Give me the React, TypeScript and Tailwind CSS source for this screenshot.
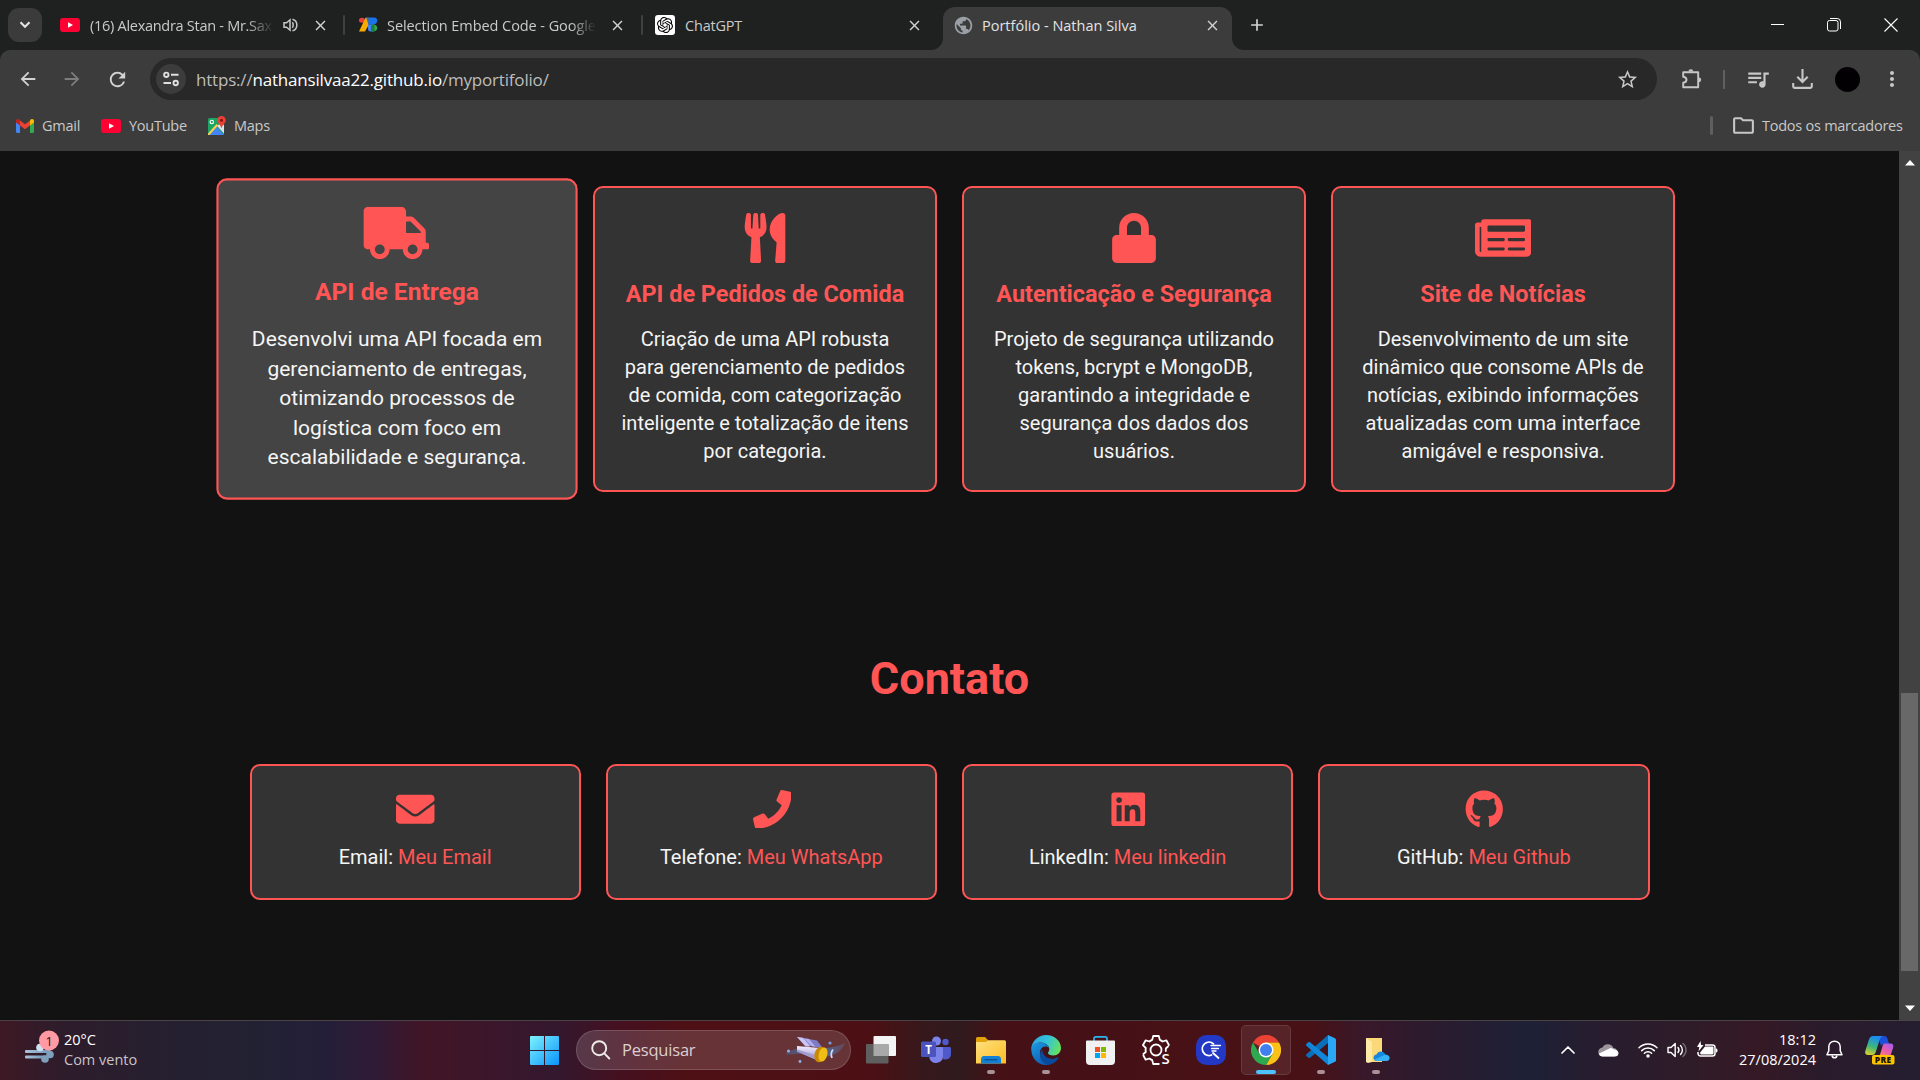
import React from "react";
import {
  FaTruck,
  FaUtensils,
  FaLock,
  FaNewspaper,
  FaEnvelope,
  FaPhone,
  FaLinkedin,
  FaGithub,
} from "react-icons/fa";
import {
  MdArrowBack,
  MdArrowForward,
  MdRefresh,
  MdStarOutline,
  MdClose,
  MdAdd,
  MdMoreVert,
  MdOutlineFolder,
  MdQueueMusic,
  MdPublic,
} from "react-icons/md";
import { SiOpenai } from "react-icons/si";

/* ---------- browser icons ---------- */

function YouTubeIcon() {
  return (
    <svg width="20" height="14" viewBox="0 0 20 14" className="shrink-0">
      <rect width="20" height="14" rx="3" fill="#ff0033" />
      <path d="M8 4.2 13 7l-5 2.8z" fill="#fff" />
    </svg>
  );
}

function GmailIcon() {
  return (
    <svg width="18" height="14" viewBox="0 0 18 14" className="shrink-0">
      <path d="M0 3v9.8c0 .7.5 1.2 1.2 1.2H4V6z" fill="#4285f4" />
      <path d="M18 3v9.8c0 .7-.5 1.2-1.2 1.2H14V6z" fill="#34a853" />
      <path d="M14 1.5v5l4-3V2c0-1.8-2-2.6-3.4-1.5z" fill="#fbbc04" />
      <path d="M4 6.5v-5l5 3.7 5-3.7v5l-5 3.8z" fill="#ea4335" />
      <path d="M0 2v1.5l4 3v-5L3.4.5C2-.6 0 .2 0 2z" fill="#c5221f" />
    </svg>
  );
}

function MapsIcon() {
  return (
    <svg width="18" height="19" viewBox="0 0 18 19" className="shrink-0">
      <rect x="0" y="2" width="16" height="17" rx="1.5" fill="#1da462" />
      <path d="M1 19 8.500 10.500 16 19z" fill="#4285f4" />
      <path d="M0 17.500V19h1.500L10 9.500 8.500 8z" fill="#ffd04b" />
      <path d="M9 9.800 16 17.500V9l-4-1z" fill="#dfe3e8" />
      <circle cx="3.8" cy="6" r="1.7" fill="none" stroke="#fff" strokeWidth="1.1" />
      <path d="M13.500 0C11 0 9.300 1.900 9.300 4.200c0 3 3.300 4.100 4.200 8.300.9-4.200 4.200-5.300 4.200-8.300C17.700 1.900 16 0 13.500 0z" fill="#ea4335" />
      <circle cx="13.5" cy="4.2" r="1.5" fill="#811411" />
    </svg>
  );
}

function BlocksIcon() {
  return (
    <svg width="19" height="15" viewBox="0 0 19 18" preserveAspectRatio="none" className="mb-px shrink-0">
      <circle cx="3" cy="3.8" r="3" fill="#ea4335" />
      <path d="M6.500 1h3v9L6 17.500H0z" fill="#f9ab00" />
      <path d="M9.500.5H15c2.300 0 3.300 1.600 3.300 3.700S17 9 14.500 9h-5z" fill="#1a73e8" />
      <path d="M7.200 1 9.500.5V9z" fill="#1a73e8" />
      <path d="M9 9h5v8.500h-2a3 3 0 0 1-3-3z" fill="#4285f4" />
      <path d="M13.500 9a4.200 4.200 0 1 1 0 8.300c-1.800-2-1.800-6 0-8.300z" fill="#34a853" />
      <path d="M12 10.500c1.500-1.500 3-1.700 3.500-1.500v8c-1.500.5-3 0-3.500-1z" fill="#188038" />
    </svg>
  );
}

function SpeakerIcon() {
  return (
    <svg width="16" height="14" viewBox="0 0 16 14" fill="none" stroke="#c7c7c7" strokeWidth="1.5" className="shrink-0">
      <path d="M1 4.800h2.600L7 1.800v10.400L3.600 9.200H1z" />
      <path d="M9.300 4.300c1.200 1.200 1.200 4.200 0 5.400" />
      <path d="M9.500 1.200c5.800 1.500 5.800 10.100 0 11.600" />
    </svg>
  );
}

function TuneIcon() {
  return (
    <svg width="18" height="18" viewBox="0 0 18 18" fill="none" stroke="#dedede" strokeWidth="1.9">
      <circle cx="4.3" cy="4.8" r="2.2" />
      <path d="M9 4.800h7.500M1.500 13h7.500" />
      <circle cx="13.7" cy="13" r="2.2" />
    </svg>
  );
}

function PuzzleIcon() {
  return (
    <svg width="22" height="22" viewBox="0 0 22 22">
      <path
        d="M2.200 4.200h15v15h-15v-4.500c4.400-.6 4.400-5.400 0-6z"
        fill="none"
        stroke="#c7c7c7"
        strokeWidth="1.9"
        strokeLinejoin="round"
      />
      <path d="M7.400 3.600a2.400 2.400 0 0 1 4.800 0zM17.800 9.400a2.400 2.400 0 0 1 0 4.800z" fill="#c7c7c7" />
    </svg>
  );
}

function DownloadIcon() {
  return (
    <svg width="21" height="20" viewBox="0 0 21 20" fill="none" stroke="#c7c7c7" strokeWidth="2.1">
      <path d="M10.500 0v12.500M5.300 7.800 10.500 13l5.200-5.200" />
      <path d="M1.200 14v3.500c0 .9.600 1.400 1.400 1.400h15.800c.8 0 1.400-.5 1.400-1.400V14" />
    </svg>
  );
}

/* ---------- window chrome ---------- */

function TabClose() {
  return <MdClose className="size-[17px] shrink-0 text-[#d2d2d2]" />;
}

function TabStrip() {
  return (
    <div className="flex h-[50px] w-full items-center bg-[#1f2120] text-[#c9cac9]">
      <div className="ml-2 flex h-[34px] w-[34px] items-center justify-center rounded-[11px] bg-[#3b3b3b]">
        <svg width="12" height="8" viewBox="0 0 12 8" fill="none" stroke="#e3e3e3" strokeWidth="2.1">
          <path d="M1.500 1.200 6 5.700l4.500-4.500" />
        </svg>
      </div>
      <div className="ml-[18px] flex w-[284px] items-center">
        <YouTubeIcon />
        <span className="mt-px ml-[10px] w-[184px] whitespace-nowrap text-[14.5px] tracking-[-0.28px] mask-r-from-85%">
          (16) Alexandra Stan - Mr.Sax
        </span>
        <span className="ml-[9px] flex">
          <SpeakerIcon />
        </span>
        <span className="ml-[13px] flex">
          <TabClose />
        </span>
      </div>
      <div className="-ml-[1px] h-5 w-[2px] rounded bg-[#3f4140]" />
      <div className="ml-[14px] flex w-[282px] items-center">
        <BlocksIcon />
        <span className="mt-px ml-[9px] w-[209px] whitespace-nowrap text-[14.5px] tracking-[-0.07px] mask-r-from-88%">
          Selection Embed Code - Google
        </span>
        <span className="ml-[13px] flex">
          <TabClose />
        </span>
      </div>
      <div className="h-5 w-[2px] rounded bg-[#3f4140]" />
      <div className="ml-[12px] flex w-[276px] items-center">
        <span className="flex size-5 items-center justify-center rounded-[3px] bg-white">
          <SiOpenai className="size-[16px] text-black" />
        </span>
        <span className="mt-px ml-[10px] grow whitespace-nowrap text-[14.5px] tracking-[-0.2px]">ChatGPT</span>
        <span className="mr-[8px] flex">
          <TabClose />
        </span>
      </div>
      <div className="flex h-[50px] items-end self-stretch">
        <svg width="12" height="12" viewBox="0 0 12 12">
          <path d="M12 0v12H0A12 12 0 0 0 12 0z" fill="#3c3c3c" />
        </svg>
        <div className="flex h-[43px] w-[289px] items-center rounded-t-[12px] bg-[#3c3c3c] pb-[7px]">
          <MdPublic className="ml-[10px] size-[21px] text-[#9aa0a6]" />
          <span className="mt-px ml-[8px] grow whitespace-nowrap text-[14.5px] text-[#e3e3e3]">
            Portfólio - Nathan Silva
          </span>
          <span className="mr-[11px] flex">
            <TabClose />
          </span>
        </div>
        <svg width="12" height="12" viewBox="0 0 12 12">
          <path d="M0 0v12h12A12 12 0 0 1 0 0z" fill="#3c3c3c" />
        </svg>
      </div>
      <MdAdd className="ml-[3px] size-[20px] text-[#d2d2d2]" />
      <div className="ml-auto flex items-center pb-[1px]">
        <div className="h-px w-[13px] bg-white" />
        <svg width="14" height="14" viewBox="0 0 14 14" fill="none" stroke="#fff" className="ml-[43px]">
          <rect x="0.5" y="2.5" width="10.5" height="10.5" rx="2" />
          <path d="M3 .5h7.200a3.300 3.300 0 0 1 3.300 3.300V11" />
        </svg>
        <svg width="14" height="14" viewBox="0 0 14 14" stroke="#fff" strokeWidth="1.1" className="mr-[22px] ml-[43px]">
          <path d="M.5.5l13 13M13.500.5l-13 13" />
        </svg>
      </div>
    </div>
  );
}

function Toolbar() {
  return (
    <div className="w-full bg-[#1f2120]">
      <div className="h-[101px] w-full rounded-t-[10px] bg-[#3c3c3c] pt-2">
        <div className="flex h-[42px] items-center">
          <MdArrowBack className="ml-[17px] size-[22px] text-[#d2d2d2]" />
          <MdArrowForward className="ml-[22px] size-[22px] text-[#7d7d7d]" />
          <MdRefresh className="ml-[23px] size-[23px] text-[#d2d2d2]" />
          <div className="ml-[21px] flex h-[42px] w-[1507px] items-center rounded-full bg-[#282828]">
            <div className="ml-[6px] flex size-[30px] items-center justify-center rounded-full bg-[#3c3c3c]">
              <TuneIcon />
            </div>
            <span className="mt-px ml-[10px] text-[17px] tracking-[-0.19px] whitespace-nowrap text-[#bdbdbd]">
              https://<span className="text-white">nathansilvaa22.github.io</span>/myportifolio/
            </span>
            <MdStarOutline className="mr-[18px] ml-auto size-[23px] text-[#c7c7c7]" />
          </div>
          <span className="ml-[24px] flex">
            <PuzzleIcon />
          </span>
          <div className="ml-[20px] h-[19px] w-[2px] bg-[#606060]" />
          <MdQueueMusic className="ml-[20px] size-[26px] text-[#c7c7c7]" />
          <span className="ml-[21px] flex">
            <DownloadIcon />
          </span>
          <div className="ml-[22px] size-[25px] rounded-full bg-[#030003]" />
          <MdMoreVert className="ml-[20px] size-[24px] text-[#c7c7c7]" />
        </div>
        <div className="flex h-[51px] items-center text-[14.5px] tracking-[-0.25px] text-[#c9c9c9]">
          <div className="ml-4 flex w-[85px] items-center gap-[8px]">
            <GmailIcon />
            <span>Gmail</span>
          </div>
          <div className="flex w-[107px] items-center gap-[8px]">
            <YouTubeIcon />
            <span>YouTube</span>
          </div>
          <div className="flex items-center gap-[8px]">
            <MapsIcon />
            <span>Maps</span>
          </div>
          <div className="ml-auto flex items-center">
            <div className="h-[19px] w-[3px] rounded bg-[#5f5f5f]" />
            <MdOutlineFolder className="ml-[18px] size-[25px] text-[#c7c7c7]" />
            <span className="mr-[18px] ml-[6px] w-[140px] text-right whitespace-nowrap">Todos os marcadores</span>
          </div>
        </div>
      </div>
    </div>
  );
}

/* ---------- portfolio page ---------- */

type Project = {
  icon: React.ReactNode;
  title: string;
  lines: string[];
  active?: boolean;
};

const projects: Project[] = [
  {
    icon: <FaTruck className="mr-px h-[50px] w-[62.5px]" />,
    title: "API de Entrega",
    lines: [
      "Desenvolvi uma API focada em",
      "gerenciamento de entregas,",
      "otimizando processos de",
      "logística com foco em",
      "escalabilidade e segurança.",
    ],
    active: true,
  },
  {
    icon: <FaUtensils className="size-[50px]" />,
    title: "API de Pedidos de Comida",
    lines: [
      "Criação de uma API robusta",
      "para gerenciamento de pedidos",
      "de comida, com categorização",
      "inteligente e totalização de itens",
      "por categoria.",
    ],
  },
  {
    icon: <FaLock className="size-[50px]" />,
    title: "Autenticação e Segurança",
    lines: [
      "Projeto de segurança utilizando",
      "tokens, bcrypt e MongoDB,",
      "garantindo a integridade e",
      "segurança dos dados dos",
      "usuários.",
    ],
  },
  {
    icon: <FaNewspaper className="h-[50px] w-[56.25px]" />,
    title: "Site de Notícias",
    lines: [
      "Desenvolvimento de um site",
      "dinâmico que consome APIs de",
      "notícias, exibindo informações",
      "atualizadas com uma interface",
      "amigável e responsiva.",
    ],
  },
];

const contacts = [
  { icon: <FaEnvelope />, label: "Email:", link: "Meu Email" },
  { icon: <FaPhone />, label: "Telefone:", link: "Meu WhatsApp" },
  { icon: <FaLinkedin />, label: "LinkedIn:", link: "Meu linkedin" },
  { icon: <FaGithub />, label: "GitHub:", link: "Meu Github" },
];

function ProjectCard({ icon, title, lines, active }: Project) {
  return (
    <div
      className={
        "flex h-[306px] w-[344px] flex-col items-center rounded-[10px] border-2 border-[#ff5555] pt-[25px] " +
        (active ? "translate-x-px scale-105 bg-[#444444]" : "bg-[#333333]")
      }
    >
      <div className="text-[#ff5555]">{icon}</div>
      <h3 className="mt-[14px] text-[23.4px] leading-[34px] font-bold whitespace-nowrap text-[#ff5555]">{title}</h3>
      <p className="mt-[14px] text-center text-[20px] leading-[28px] whitespace-nowrap text-[#f5f5f5]">
        {lines.map((l) => (
          <span key={l} className="block">
            {l}
          </span>
        ))}
      </p>
    </div>
  );
}

function Page() {
  return (
    <div className="flex h-[869px] w-full bg-[#121212]">
      <main className="w-[1899px] font-[Roboto,sans-serif]">
        <section className="flex justify-center gap-[25px] pt-[35px]">
          {projects.map((p) => (
            <ProjectCard key={p.title} {...p} />
          ))}
        </section>
        <h2 className="mt-[155px] text-center text-[45px] leading-[63px] font-bold text-[#ff5555]">Contato</h2>
        <section className="mx-auto mt-[54px] grid w-[1400px] grid-cols-4 gap-[25px]">
          {contacts.map((c) => (
            <div
              key={c.label}
              className="flex h-[136px] flex-col items-center rounded-[10px] border-2 border-[#ff5555] bg-[#333333] pt-[23.5px]"
            >
              <div className="pl-px text-[38.5px] text-[#ff5555]">{c.icon}</div>
              <p className="mt-[15px] text-[20px] leading-[28px] whitespace-nowrap text-[#f5f5f5]">
                {c.label} <span className="text-[#ff5555]">{c.link}</span>
              </p>
            </div>
          ))}
        </section>
      </main>
      <div className="flex w-[21px] flex-col items-center bg-[#424242]">
        <svg width="10" height="6" viewBox="0 0 10 6" className="mt-[9px]">
          <path d="M5 0l5 5.500H0z" fill="#fff" />
        </svg>
        <div className="mt-[527px] h-[278px] w-[17px] bg-[#686868]" />
        <svg width="10" height="6" viewBox="0 0 10 6" className="mt-auto mb-[9px]">
          <path d="M0 .5h10L5 6z" fill="#fff" />
        </svg>
      </div>
    </div>
  );
}

/* ---------- taskbar ---------- */

function WeatherIcon() {
  return (
    <svg width="35" height="34" viewBox="0 0 35 34">
      <defs>
        <linearGradient id="wind" x1="0" x2="1">
          <stop offset="0" stopColor="#a9c5da" />
          <stop offset="1" stopColor="#6f94b5" />
        </linearGradient>
      </defs>
      <rect x="0" y="20" width="26" height="3" rx="1" fill="url(#wind)" />
      <rect x="0" y="25.5" width="21" height="3" rx="1" fill="url(#wind)" />
      <circle cx="25" cy="24.5" r="3.8" fill="#7fa0bd" />
      <circle cx="20" cy="29" r="3.8" fill="#7fa0bd" />
      <circle cx="15" cy="17.5" r="3.8" fill="#cfe0f0" />
      <circle cx="24" cy="10.5" r="10" fill="#ff99a4" />
      <text x="24" y="15.5" textAnchor="middle" fontSize="13.5" fontFamily="Open Sans, sans-serif" fill="#2b1a1c">
        1
      </text>
    </svg>
  );
}

function WindowsIcon() {
  return (
    <svg width="29" height="29" viewBox="0 0 29 29">
      <defs>
        <linearGradient id="win" x1="0" y1="0" x2="1" y2="1" gradientUnits="objectBoundingBox">
          <stop offset="0" stopColor="#7df3ff" />
          <stop offset="1" stopColor="#0a93fb" />
        </linearGradient>
      </defs>
      <path
        d="M1 0h13v14H0V1a1 1 0 0 1 1-1zM15 0h13a1 1 0 0 1 1 1v13H15zM0 15h14v14H1a1 1 0 0 1-1-1zM15 15h14v13a1 1 0 0 1-1 1H15z"
        fill="url(#win)"
      />
    </svg>
  );
}

function SearchArt() {
  return (
    <svg width="60" height="30" viewBox="0 0 60 30">
      <defs>
        <linearGradient id="comet" x1="0" x2="1">
          <stop offset="0" stopColor="#4a6fa8" stopOpacity="0.3" />
          <stop offset="0.5" stopColor="#3f6cae" />
          <stop offset="1" stopColor="#5e7fb4" stopOpacity="0.25" />
        </linearGradient>
        <linearGradient id="tube" x1="0" y1="0" x2="0" y2="1">
          <stop offset="0" stopColor="#f1edff" />
          <stop offset="1" stopColor="#9b93cc" />
        </linearGradient>
      </defs>
      <path d="M0 19c6-5 14-6 20-6 12 0 26 2 40-5-2 7-9 12-20 14-10 1.500-14-3-24-3.500-6 0-11 2-16 .5z" fill="url(#comet)" />
      <path d="M12 2l20 3.500 6 8-14-3z" fill="#7f7bcb" />
      <path d="M12 2l6 .8 7.500 8.700h-5z" fill="#c9c6f5" />
      <path d="M19 3.200l5 .9 6.500 7.600-4-.5z" fill="#b4b0ec" />
      <path d="M12 11l23 2-3 12-20-9z" fill="url(#tube)" />
      <path d="M12 14.500l20 6-1 4.200-19-8z" fill="#a49cd0" />
      <ellipse cx="35" cy="19.5" rx="5.5" ry="8" transform="rotate(15 35 19.5)" fill="#c68a06" />
      <ellipse cx="38" cy="19.5" rx="4.3" ry="7.2" transform="rotate(15 38 19.5)" fill="#f0bd14" />
      <path d="M48 14.500q-3 3.500-1 8.500" stroke="#c7dcff" strokeWidth="1.8" fill="none" />
      <circle cx="3.5" cy="16" r="1.5" fill="#8db4ef" />
      <circle cx="15" cy="26.5" r="1.4" fill="#8db4ef" />
      <circle cx="45" cy="8" r="1.6" fill="#6f9de0" />
    </svg>
  );
}

function TaskViewIcon() {
  return (
    <svg width="30" height="30" viewBox="0 0 30 30">
      <rect x="7.5" y="1" width="22.5" height="20" rx="1" fill="#f4f4f4" />
      <rect x="0" y="9" width="22.5" height="19.5" rx="1" fill="#5f5f5f" />
      <rect x="7.5" y="9" width="15" height="12" fill="#a9a9a9" />
    </svg>
  );
}

function TeamsIcon() {
  return (
    <svg width="30" height="30" viewBox="0 0 30 30">
      <circle cx="24.5" cy="7" r="3.2" fill="#5059c9" />
      <path d="M20 12h8.500c.8 0 1.500.7 1.500 1.500V19a5.500 5.500 0 0 1-8 5z" fill="#5059c9" />
      <circle cx="15.5" cy="6" r="4.5" fill="#7b83eb" />
      <path d="M9 12h11.500c1 0 1.500.600 1.500 1.500V21a7 7 0 0 1-13.500 2.500z" fill="#7b83eb" />
      <rect x="0" y="6.5" width="15" height="15.5" rx="1.5" fill="#4b53bc" />
      <text x="7.5" y="18.5" textAnchor="middle" fontSize="11.5" fontWeight="700" fontFamily="Open Sans, sans-serif" fill="#fff">
        T
      </text>
    </svg>
  );
}

function ExplorerIcon() {
  return (
    <svg width="30" height="30" viewBox="0 0 30 30">
      <defs>
        <linearGradient id="fold" x1="0" y1="0" x2="1" y2="1">
          <stop offset="0" stopColor="#ffe082" />
          <stop offset="1" stopColor="#fcbd1f" />
        </linearGradient>
      </defs>
      <path d="M0 3.500A1.500 1.500 0 0 1 1.500 2H9l3.500 3.500V9H0z" fill="#e2a00a" />
      <path d="M0 7h10l2.500-1.800H28.500A1.500 1.500 0 0 1 30 6.700V28.500H0z" fill="url(#fold)" />
      <path d="M5 28.500v-4c0-2 1-3.500 3-3.500h14c2 0 3 1.500 3 3.500v4z" fill="#1180d6" />
      <path d="M8.500 24.700h13" stroke="#0b4f8a" strokeWidth="1.3" />
    </svg>
  );
}

function EdgeIcon() {
  return (
    <svg width="30" height="30" viewBox="0 0 30 30">
      <defs>
        <linearGradient id="edgeTop" x1="0" y1="0.3" x2="1" y2="0.6">
          <stop offset="0" stopColor="#2aa9e0" />
          <stop offset="0.5" stopColor="#35c3d8" />
          <stop offset="1" stopColor="#66e35a" />
        </linearGradient>
        <linearGradient id="edgeMid" x1="0" y1="0" x2="0.6" y2="1">
          <stop offset="0" stopColor="#1c9de0" />
          <stop offset="1" stopColor="#0f5cb5" />
        </linearGradient>
      </defs>
      <path d="M.2 13C1.500 5.500 7.500 0 15 0c8.500 0 15 6 15 13 0 4.500-3.500 7.500-7.500 7.500-3.500 0-5.500-1.200-5.500-2.400 0-1 1.300-1.500 1.300-4C18.300 10.500 14.500 7.500 10 7.500 5 7.500 1.500 10 .2 13z" fill="url(#edgeTop)" />
      <path d="M.2 13C1 9.500 5 7.500 9.500 7.500c4.500 0 8 2.500 8.700 5.500-1-1-2.500-1.500-3.700-1.500-3.500 0-5.500 3-5.500 6.500 0 5.500 4 11 9.500 11.500-1 .3-2.300.5-3.500.5C6.500 30 0 23 .2 13z" fill="url(#edgeMid)" />
      <path d="M11.300 14.500C9.700 16 9 18 9 20c0 5 4 9.700 9.500 9.700 4.200-.8 7-3.200 9-6.700.3-.7-.3-1-.8-.7-1.700.9-3.700 1.500-5.700 1.500-5.500 0-9.700-4.300-9.700-9.300z" fill="#0a4a9c" />
    </svg>
  );
}

function StoreIcon() {
  return (
    <svg width="30" height="30" viewBox="0 0 30 30">
      <path d="M8 7V3.500C8 2.500 8.700 1.800 9.700 1.800h9.600c1 0 1.700.7 1.700 1.700V7" fill="none" stroke="#2bb5f0" strokeWidth="1.7" />
      <path d="M1 5.500h27a1 1 0 0 1 1 1V26a4 4 0 0 1-4 4H4a4 4 0 0 1-4-4V6.500a1 1 0 0 1 1-1z" fill="#f1f1f1" />
      <rect x="9" y="12" width="5" height="5" fill="#f25022" />
      <rect x="15" y="12" width="5" height="5" fill="#7fba00" />
      <rect x="9" y="18" width="5" height="5" fill="#00a4ef" />
      <rect x="15" y="18" width="5" height="5" fill="#ffb900" />
    </svg>
  );
}

function GearIcon() {
  return (
    <svg width="32" height="34" viewBox="0 0 32 34">
      <g fill="none" stroke="#fff" strokeWidth="1.8" strokeLinejoin="round" strokeLinecap="round" transform="translate(1 1.5)">
        <path d="M17.800 29.500H12.200l-1-3.900c-1-.4-1.900-.9-2.700-1.600l-3.800 1.200-2.300-4.200M2.400 19.500l2.400-2a9 9 0 0 1 0-4l-2.900-2.800 2.800-4.900 3.800 1.200c.8-.7 1.700-1.200 2.700-1.600l1-3.900h5.600l1 3.900c1 .4 1.900.9 2.700 1.600l3.800-1.200 2.600 4.700M27 12l-2.200 2v2.500" />
        <circle cx="15" cy="15.500" r="5.500" />
      </g>
      <text x="25.5" y="31" textAnchor="middle" fontSize="15" fontWeight="600" fontFamily="Open Sans, sans-serif" fill="#fff">
        S
      </text>
    </svg>
  );
}

function BlueAppIcon() {
  return (
    <svg width="30" height="30" viewBox="0 0 30 30">
      <rect width="30" height="30" rx="10.5" fill="#2338c4" />
      <g fill="none" stroke="#fff" strokeWidth="1.8" strokeLinecap="round">
        <path d="M17.500 8.800A6.700 6.700 0 1 0 15.500 20M17 18l5.500 5" />
        <path d="M15 10.500h9.500M15.500 13.500h7M16 16h4" strokeWidth="1.3" />
      </g>
    </svg>
  );
}

function ChromeIcon() {
  return (
    <svg width="30" height="30" viewBox="0 0 30 30">
      <path d="M15 15 2 7.500A15 15 0 0 1 28 7.500H15z" fill="#ea4335" />
      <path d="M15 15 21.500 18.700 15 30A15 15 0 0 0 28 7.500H15z" fill="#fbc116" />
      <path d="M15 15 8.500 18.700 2 7.500A15 15 0 0 0 15 30l6.500-11.300z" fill="#2da94f" />
      <circle cx="15" cy="15" r="7.5" fill="#fff" />
      <circle cx="15" cy="15" r="6" fill="#3f7ff0" />
    </svg>
  );
}

function CodeIcon() {
  return (
    <svg width="30" height="30" viewBox="0 0 30 30">
      <path d="M22 0v8L4 22.800c-.5.400-1.100.4-1.600 0L.4 21c-.5-.5-.5-1.300 0-1.800z" fill="#0a6fb8" />
      <path d="M22 30v-8L4 7.200c-.5-.4-1.100-.4-1.600 0L.4 9c-.5.500-.5 1.300 0 1.800z" fill="#1086d8" />
      <path d="M22 0l7 3.200c.6.300 1 .9 1 1.600v20.400c0 .7-.4 1.300-1 1.600L22 30z" fill="#2aa7f5" />
    </svg>
  );
}

function CloudFolderIcon() {
  return (
    <svg width="28" height="30" viewBox="-4 0 28 30">
      <path d="M0 3h16v24H3z" fill="#fbd878" />
      <path d="M0 3l6 4v20l-4 1-2-1z" fill="#ffe9a6" />
      <path d="M11 26c-2.300 0-3.500-1.500-3.500-3.200 0-1.800 1.400-3 3-3.200.7-2 2.400-3 4.300-3 2 0 3.800 1.200 4.500 3 2.600.1 4.200 1.500 4.200 3.400 0 1.800-1.400 3-3.500 3z" fill="#1687dc" />
      <path d="M8.500 24.500 19 19.700c2.600.1 4.500 1.500 4.500 3.300S22 26 20 26h-9c-1 0-1.900-.6-2.500-1.500z" fill="#35b0f2" />
    </svg>
  );
}

const apps: { icon: React.ReactNode; state?: "open" | "active" }[] = [
  { icon: <TaskViewIcon /> },
  { icon: <TeamsIcon /> },
  { icon: <ExplorerIcon />, state: "open" },
  { icon: <EdgeIcon />, state: "open" },
  { icon: <StoreIcon /> },
  { icon: <GearIcon /> },
  { icon: <BlueAppIcon /> },
  { icon: <ChromeIcon />, state: "active" },
  { icon: <CodeIcon />, state: "open" },
  { icon: <CloudFolderIcon />, state: "open" },
];

function AppButton({ icon, state }: { icon: React.ReactNode; state?: "open" | "active" }) {
  return (
    <div
      className={
        "flex h-[50px] w-[50px] flex-col items-center rounded-[5px] border pt-[9px] " +
        (state === "active" ? "border-white/10 bg-white/8" : "border-transparent")
      }
    >
      <div className="flex h-[30px] items-center">{icon}</div>
      {state === "open" && <div className="mt-[5px] h-[4px] w-[8px] rounded-full bg-[#a99097]" />}
      {state === "active" && <div className="mt-[5px] h-[4px] w-[20px] rounded-full bg-[#4cc2ff]" />}
    </div>
  );
}

function CopilotIcon() {
  return (
    <svg width="30" height="29" viewBox="0 0 30 29">
      <defs>
        <linearGradient id="cpL" x1="0.3" y1="0" x2="0" y2="1">
          <stop offset="0" stopColor="#1b8df0" />
          <stop offset="0.5" stopColor="#3fb878" />
          <stop offset="1" stopColor="#f5d020" />
        </linearGradient>
        <linearGradient id="cpR" x1="1" y1="0" x2="0.2" y2="1">
          <stop offset="0" stopColor="#a05cf0" />
          <stop offset="0.6" stopColor="#ee5fa8" />
          <stop offset="1" stopColor="#ff9450" />
        </linearGradient>
      </defs>
      <path d="M13 0h6c2 0 3 1 3.600 3l1.400 5h-5c-1.500 0-2.500.7-3 2z" fill="#1d4fd8" />
      <path d="M8 0h10c-2 .5-2.800 2-3.400 4l-3.800 12c-.6 2-1.500 3-3.500 3H3C.5 19-.3 17 .3 15L4 3.500C4.700 1.200 6 0 8 0z" fill="url(#cpL)" />
      <path d="M20 7.500h5.500c2.500 0 3.300 2 2.700 4L25 21H12c2-.5 2.800-1.500 3.400-3.500l2.300-8c.4-1.300 1.100-2 2.300-2z" fill="url(#cpR)" />
      <rect x="7" y="19" width="22.5" height="9.5" rx="2" fill="#ffc400" />
      <text x="18.2" y="26.8" textAnchor="middle" fontSize="8.5" fontWeight="800" letterSpacing="0.4" fontFamily="Open Sans, sans-serif" fill="#1a1200">
        PRE
      </text>
    </svg>
  );
}

function Tray() {
  return (
    <div className="ml-auto flex items-center text-white">
      <svg width="14" height="8" viewBox="0 0 14 8" fill="none" stroke="#fff" strokeWidth="1.7" strokeLinecap="round" strokeLinejoin="round">
        <path d="M1 7l6-6 6 6" />
      </svg>
      <svg width="21" height="14" viewBox="0 0 21 14" className="ml-[23px]">
        <path d="M5 13.500a4.500 4.500 0 0 1-.5-9 6 6 0 0 1 10.800.5 4.400 4.400 0 0 1 1.200 8.500z" fill="#9b949b" />
        <path d="M1 10.500 12.500 5c2 .3 3 1 3.500 1.500 2.500 0 4.500 1.600 4.500 3.700 0 2-1.500 3.300-3.500 3.300H4.500C2.500 13.500 1 12.300 1 10.500z" fill="#fff" />
      </svg>
      <svg width="20" height="16" viewBox="0 0 20 16" className="ml-[19px]" fill="none" stroke="#fff" strokeWidth="1.5" strokeLinecap="round">
        <path d="M1 5.800a12.700 12.700 0 0 1 18 0M3.700 8.600a8.900 8.900 0 0 1 12.600 0M6.400 11.300a5 5 0 0 1 7.200 0" />
        <circle cx="10" cy="14" r="1" fill="#fff" />
      </svg>
      <svg width="20" height="18" viewBox="0 0 20 18" className="ml-[9px]" fill="none" stroke="#fff" strokeWidth="1.4" strokeLinecap="round" strokeLinejoin="round">
        <path d="M1 6.500h3L8.200 2.500v13L4 11.500H1z" />
        <path d="M11 6.500c1.200 1.500 1.200 3.500 0 5M13.500 4.500c2.500 2.500 2.500 6.500 0 9" />
        <path d="M16 2.500c4 3.600 4 9.400 0 13" stroke="#756b75" />
      </svg>
      <svg width="21" height="18" viewBox="0 0 21 18" className="mb-px ml-[10px]">
        <path d="M8 4h7.500A2.500 2.500 0 0 1 18 6.500v6a2.500 2.500 0 0 1-2.500 2.500h-12A2.500 2.500 0 0 1 1 12.500V11" fill="none" stroke="#fff" strokeWidth="1.5" />
        <path d="M8 5.500h7.300c.7 0 1.200.5 1.200 1.200v5.600c0 .7-.5 1.200-1.200 1.200H4L2.800 12z" fill="#fff" />
        <path d="M18.800 7.500c1 0 1.700.6 1.700 2s-.7 2-1.700 2z" fill="#fff" />
        <path d="M3.500 0 0 6h2.300L1.500 10.500 6.500 4H4z" fill="#fff" />
      </svg>
      <div className="ml-[10px] w-[88px] text-right text-[14.5px] leading-[20px] whitespace-nowrap">
        <div>18:12</div>
        <div>27/08/2024</div>
      </div>
      <svg width="17" height="20" viewBox="0 0 17 20" className="ml-[10px]" fill="none" stroke="#fff" strokeWidth="1.5" strokeLinejoin="round">
        <path d="M8.500 1.200c-3.300 0-5.700 2.500-5.700 5.600v4L1 14.800h15l-1.800-4v-4c0-3.100-2.400-5.600-5.700-5.600z" />
        <path d="M6 15.500c.3 1.500 1.300 2.300 2.500 2.300s2.200-.8 2.500-2.300" />
      </svg>
      <span className="mr-[25px] ml-[22px] flex pt-px">
        <CopilotIcon />
      </span>
    </div>
  );
}

function Taskbar() {
  return (
    <div className="flex h-[60px] w-full items-center border-t border-[#4a4246] bg-[linear-gradient(90deg,#3e1824_0px,#2e1c2b_60px,#261f2f_150px,#222132_250px,#231f38_320px,#2e1b37_370px,#421526_425px,#3c162a_480px,#33182e_555px,#451020_620px,#4e1014_690px,#4c1014_870px,#35181c_925px,#301a1e_960px,#451116_1000px,#481116_1310px,#38182a_1365px,#2a1b2d_1430px,#1d2036_1530px,#261d2f_1590px,#2e1c29_1680px,#351925_1760px,#2a1b2b_1820px,#241e30_1920px)] pb-px">
      <div className="ml-[25px] flex w-[505px] items-center">
        <div className="flex w-[39px] pb-[7px]">
          <WeatherIcon />
        </div>
        <div className="text-[14.5px] leading-[20px]">
          <div className="text-white">20°C</div>
          <div className="text-[#c9c3c8]">Com vento</div>
        </div>
      </div>
      <WindowsIcon />
      <div className="ml-[17px] flex h-[40px] w-[275px] items-center rounded-full border border-white/15 bg-white/15">
        <svg width="20" height="20" viewBox="0 0 20 20" className="ml-[14px]" fill="none" stroke="#f0eaea" strokeWidth="1.9" strokeLinecap="round">
          <circle cx="8.2" cy="8.2" r="7" />
          <path d="M13.300 13.300 18.300 18.500" />
        </svg>
        <span className="mt-px ml-[11px] text-[16.5px] tracking-[-0.2px] text-[#dccfd0]">Pesquisar</span>
        <span className="mr-[5px] ml-auto flex">
          <SearchArt />
        </span>
      </div>
      <div className="ml-[5px] flex gap-[5px]">
        {apps.map((a, i) => (
          <AppButton key={i} {...a} />
        ))}
      </div>
      <Tray />
    </div>
  );
}

export default function App() {
  return (
    <div className="flex h-[1080px] w-[1920px] flex-col overflow-hidden bg-[#121212] font-['Open_Sans',sans-serif]">
      <TabStrip />
      <Toolbar />
      <Page />
      <Taskbar />
    </div>
  );
}
